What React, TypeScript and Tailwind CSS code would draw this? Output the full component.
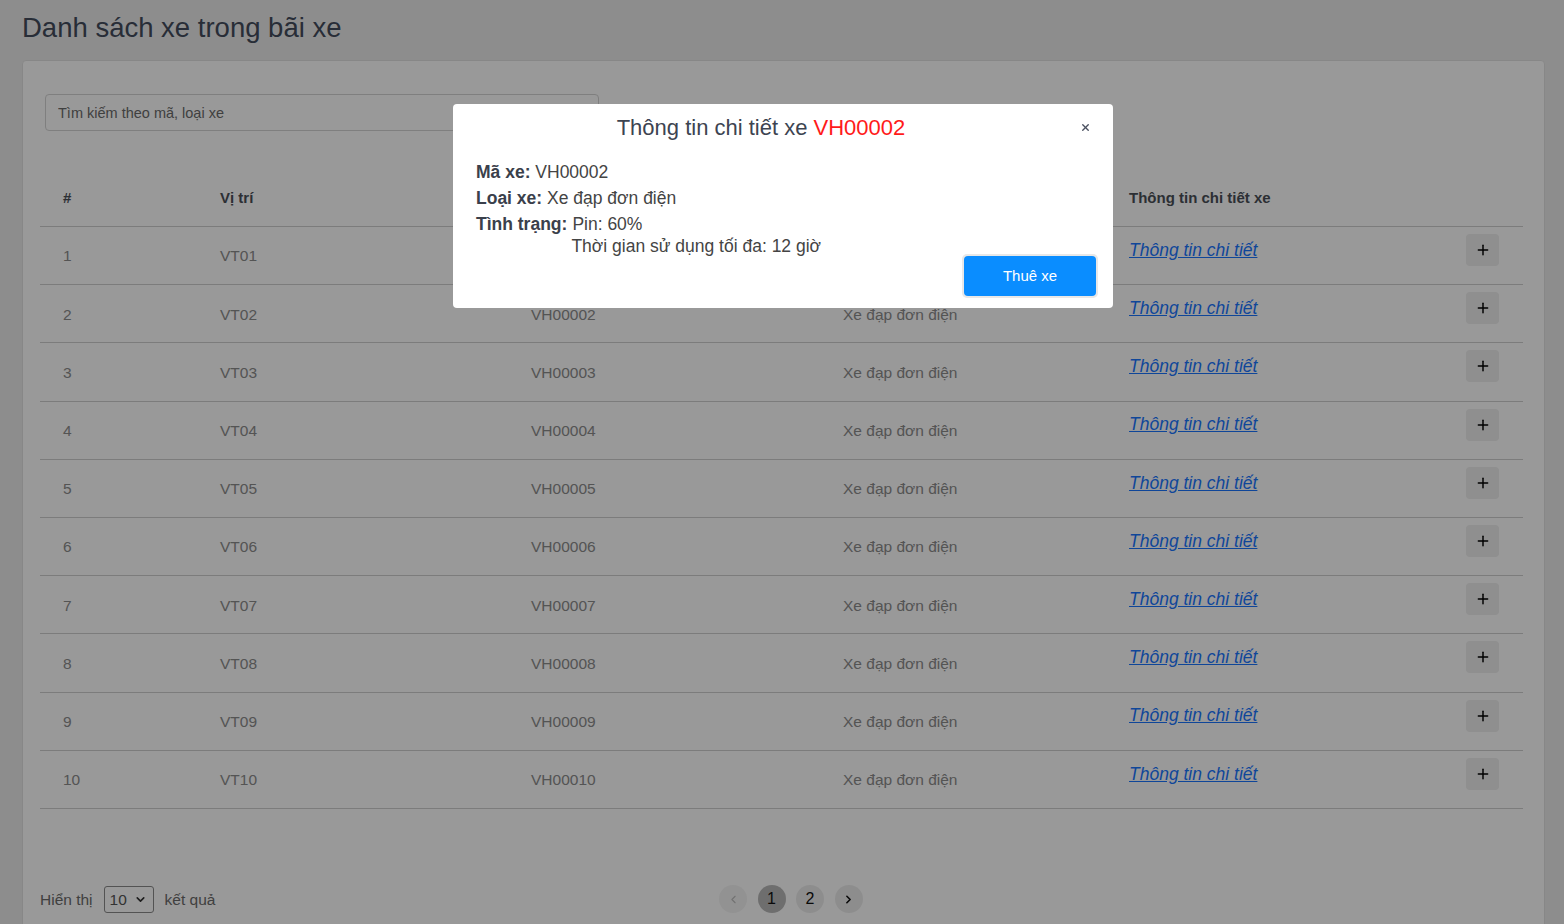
import { ChevronDown, ChevronLeft, ChevronRight, Plus, X } from 'lucide-react';

const rows = Array.from({ length: 10 }, (_, i) => {
  const n = i + 1;
  const pad = n < 10 ? `0${n}` : `${n}`;
  return { id: n, pos: `VT${pad}`, code: `VH000${pad}`, type: 'Xe đạp đơn điện' };
});

function BikeTable() {
  return (
    <div className="mt-[38px] text-[15.5px]">
      <div className="grid grid-cols-[157px_311px_312px_286px_417px] h-[58px] items-center border-b border-[#cfcfcf] text-[15px] font-bold text-[#4a4f58]">
        <div className="pl-[23px] pt-[2px]">#</div>
        <div className="pl-[23px] pt-[2px]">Vị trí</div>
        <div className="pl-[23px] pt-[2px]">Mã xe</div>
        <div className="pl-[23px] pt-[2px]">Loại xe</div>
        <div className="pl-[23px] pt-[2px]">Thông tin chi tiết xe</div>
      </div>
      {rows.map((r) => (
        <div
          key={r.id}
          className="grid grid-cols-[157px_311px_312px_286px_417px] h-[58.2px] items-center border-b border-[#cfcfcf] text-[#8c8c8c]"
        >
          <div className="pl-[23px] pt-[1px]">{r.id}</div>
          <div className="pl-[23px] pt-[1px]">{r.pos}</div>
          <div className="pl-[23px] pt-[1px]">{r.code}</div>
          <div className="pl-[23px] pt-[1px]">{r.type}</div>
          <div className="pl-[23px] pr-6 self-start pt-[7px] flex items-center justify-between">
            <a href="#" className="text-[17.5px] italic underline text-[#1a76ff]">
              Thông tin chi tiết
            </a>
            <button className="w-[33px] h-[32px] rounded-[4px] bg-[#eeeeee] flex items-center justify-center text-black">
              <Plus className="w-4 h-4" strokeWidth={2.2} />
            </button>
          </div>
        </div>
      ))}
    </div>
  );
}

function DetailModal() {
  return (
    <div className="absolute inset-0 bg-black/40">
      <div className="absolute left-[453px] top-[104px] w-[660px] h-[204px] bg-white rounded-[4px] px-[23px] pt-[7px]">
        <div className="relative flex justify-center pr-[44px]">
          <h2 className="text-[22px] text-[#3d4451]">
            Thông tin chi tiết xe <span className="text-[#ff1a1a]">VH00002</span>
          </h2>
          <button className="absolute right-[-1px] top-[11px] text-[#4a5060]">
            <X className="w-[11px] h-[11px]" strokeWidth={3} />
          </button>
        </div>
        <div className="mt-[15px] text-[17.5px] text-[#444] leading-[26px]">
          <div>
            <span className="font-bold text-[#3a404b]">Mã xe:</span> VH00002
          </div>
          <div>
            <span className="font-bold text-[#3a404b]">Loại xe:</span> Xe đạp đơn điện
          </div>
          <div className="flex">
            <span className="font-bold text-[#3a404b] mr-[5px]">Tình trạng:</span>
            <div className="flex flex-col leading-[22px] pt-[2px]">
              <span>Pin: 60%</span>
              <span className="-ml-px">Thời gian sử dụng tối đa: 12 giờ</span>
            </div>
          </div>
        </div>
        <div className="absolute right-[15px] bottom-[10px] p-[2px] rounded-[5px] bg-[#e8e8e8]">
          <button className="w-[132px] h-[40px] rounded-[4px] bg-[#0a8dff] text-white text-[15px]">
            Thuê xe
          </button>
        </div>
      </div>
    </div>
  );
}

export default function App() {
  return (
    <div
      className="relative w-[1564px] h-[924px] overflow-hidden bg-[#ececec]"
      style={{ fontFamily: '"Liberation Sans", Arial, sans-serif' }}
    >
      <div className="pl-[22px] pr-[19px] pt-[11px]">
        <h1 className="text-[27.5px] leading-[34px] text-[#434b5c]">Danh sách xe trong bãi xe</h1>
        <div className="mt-[15px] h-[900px] bg-white border border-[#e2e2e2] rounded-[4px] pl-[17px] pr-[21px] pt-[33px]">
          <div className="pl-[5px]">
            <input
              className="w-[554px] h-[37px] rounded-[4px] border border-[#d4d4d4] px-3 text-[14.5px] placeholder:text-[#6b6b6b] outline-none"
              placeholder="Tìm kiếm theo mã, loại xe"
            />
          </div>
          <BikeTable />
          <div className="relative mt-[77px] flex items-center text-[15.5px] text-[#6b6b6b]">
            <span>Hiển thị</span>
            <div className="ml-[11px] mr-[11px] w-[50px] h-[27px] border border-[#8a8a8a] rounded-[3px] flex items-center justify-between pl-[5px] pr-[6px] text-[#555]">
              <span>10</span>
              <ChevronDown className="w-[13px] h-[13px] text-[#333]" strokeWidth={3} />
            </div>
            <span>kết quả</span>
            <div className="absolute left-[679px] flex items-center gap-[10.5px]">
              <span className="w-[28px] h-[28px] rounded-full bg-[#f4f4f4] flex items-center justify-center text-[#bdbdbd]">
                <ChevronLeft className="w-[13px] h-[13px]" strokeWidth={2} />
              </span>
              <span className="w-[28px] h-[28px] rounded-full bg-[#b8b8b8] flex items-center justify-center text-[#111] text-[16px]">
                1
              </span>
              <span className="w-[28px] h-[28px] rounded-full bg-[#ececec] flex items-center justify-center text-[#111] text-[16px]">
                2
              </span>
              <span className="w-[28px] h-[28px] rounded-full bg-[#ececec] flex items-center justify-center text-[#111]">
                <ChevronRight className="w-[13px] h-[13px]" strokeWidth={3} />
              </span>
            </div>
          </div>
        </div>
      </div>
      <DetailModal />
    </div>
  );
}
